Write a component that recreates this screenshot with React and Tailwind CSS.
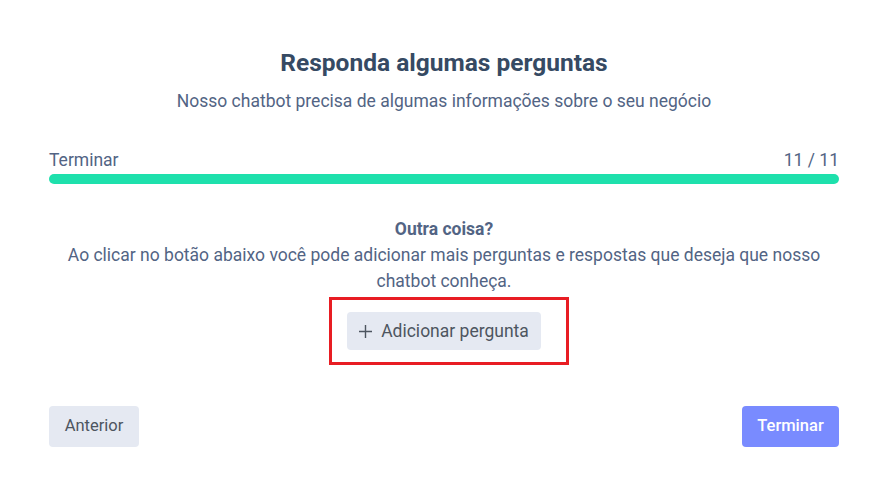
import React from "react";

export default function App() {
  return (
    <div
      className="w-[887px] h-[498px] bg-white overflow-hidden"
      style={{ fontFamily: "Roboto, 'Liberation Sans', sans-serif" }}
    >
      <div className="pr-[48px] pl-[49px] pt-[49px]">
        <h1 className="text-center text-[24.5px] leading-[28px] font-bold text-[#364a63]">
          Responda algumas perguntas
        </h1>
        <p className="mt-[12px] text-center text-[17.5px] leading-[24px] text-[#526484]">
          Nosso chatbot precisa de algumas informações sobre o seu negócio
        </p>

        <div className="mt-[35px] flex justify-between text-[17.5px] leading-[24px] text-[#526484]">
          <span>Terminar</span>
          <span>11 / 11</span>
        </div>
        <div className="mt-[2px] h-[10px] w-full rounded-full bg-[#1ee0ac]" />

        <div className="mt-[32px] text-center text-[17.5px] leading-[26px] text-[#526484]">
          <div className="font-bold">Outra coisa?</div>
          <div>
            Ao clicar no botão abaixo você pode adicionar mais perguntas e respostas que deseja que nosso chatbot conheça.
          </div>
        </div>

        <div className="mt-[3px] flex justify-center pl-[10px]">
          <div className="w-[240px] h-[68px] border-[3px] border-[#e81d23] flex items-center pl-[15px]">
            <button className="h-[38px] w-[194px] flex items-center justify-center gap-[9px] rounded-[4px] bg-[#e5e9f2] text-[17.5px] text-[#4d5560]">
              <svg width="13" height="13" viewBox="0 0 13 13" fill="none" stroke="#4d5560" strokeWidth="1.4">
                <path d="M6.5 0V13M0 6.5H13" />
              </svg>
              <span>Adicionar pergunta</span>
            </button>
          </div>
        </div>

        <div className="mt-[41px] flex justify-between">
          <button className="h-[41px] w-[90px] rounded-[4px] bg-[#e5e9f2] text-[16.5px] text-[#4d5560]">
            Anterior
          </button>
          <button className="h-[41px] w-[97px] rounded-[4px] bg-[#798bff] text-[16.5px] font-medium text-white">
            Terminar
          </button>
        </div>
      </div>
    </div>
  );
}
